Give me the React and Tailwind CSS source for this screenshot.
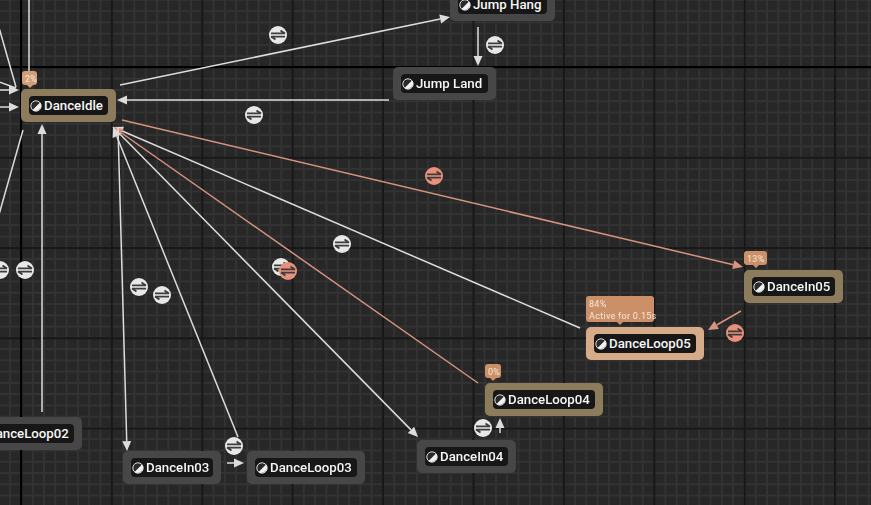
const TAN = "bg-[#8c7c5c]";
const GRAY = "bg-[#474747]";
const ACTIVE = "bg-[#d6ab88]";

const nodes = [
  { name: "DanceIdle", pos: "left-[21px] top-[89px] w-[95px]", bg: TAN },
  { name: "Jump Hang", pos: "left-[450px] top-[-12px] w-[105px]", bg: GRAY },
  { name: "Jump Land", pos: "left-[393px] top-[67px] w-[103px]", bg: GRAY },
  { name: "DanceIn05", pos: "left-[744px] top-[270px] w-[99px]", bg: TAN },
  { name: "DanceLoop05", pos: "left-[586px] top-[327px] w-[118px]", bg: ACTIVE },
  { name: "DanceLoop04", pos: "left-[485px] top-[383px] w-[118px]", bg: TAN },
  { name: "DanceIn04", pos: "left-[417px] top-[440px] w-[99px]", bg: GRAY },
  { name: "DanceIn03", pos: "left-[123px] top-[451px] w-[98px]", bg: GRAY },
  { name: "DanceLoop03", pos: "left-[247px] top-[451px] w-[118px]", bg: GRAY },
  { name: "DanceLoop02", pos: "left-[-36px] top-[417px] w-[118px]", bg: GRAY },
];

const badges = [
  { lines: ["2%"], pos: "left-[22px] top-[71px] w-[15px]", bg: "bg-[#d29e78]" },
  { lines: ["13%"], pos: "left-[744px] top-[251px] w-[23px]", bg: "bg-[#cc9068]" },
  { lines: ["84%", "Active for 0.15s"], pos: "left-[586px] top-[296px] w-[68px]", bg: "bg-[#cc9068]" },
  { lines: ["0%"], pos: "left-[485px] top-[364px] w-[16px]", bg: "bg-[#cc9068]" },
];

const W = "#dcdcdc";
const P = "#d6937e";
const wires = [
  [120, 85, 450, 17, W, 1],
  [478, 27, 478, 66, W, 1],
  [389, 100, 117, 100, W, 1],
  [580, 328, 113, 127, W, 1],
  [113, 127, 418, 437, W, 1],
  [478, 383, 113, 127, P, 1],
  [122, 120, 743, 267, P, 1],
  [238, 437, 113, 127, W, 1],
  [118, 128, 127, 451, W, 1],
  [42, 412, 42, 124, W, 1],
  [23, 130, -4, 225, W, 0],
  [-6, 10, 16, 87, W, 0],
  [29, 0, 29, 72, W, 0],
  [-6, 80, 16, 88, W, 0],
  [-4, 90, 19, 90, W, 1],
  [-4, 107, 19, 107, W, 1],
  [227, 463, 244, 463, W, 1],
  [500, 433, 500, 418, W, 1],
  [741, 311, 708, 330, P, 1],
];

const circles = [
  [278, 35, "w"], [495, 45, "w"], [254, 115, "w"], [434, 176, "p"], [342, 244, "w"],
  [281, 267, "w"], [288, 271, "p"], [139, 287, "w"], [162, 295, "w"], [25, 270, "w"],
  [0, 270, "w"], [234, 446, "w"], [483, 428, "w"], [735, 333, "p"],
];

function Wire({ d }) {
  const [x1, y1, x2, y2, c, arrow] = d;
  const a = Math.atan2(y2 - y1, x2 - x1);
  const L = 10, H = 4.5;
  const bx = x2 - L * Math.cos(a), by = y2 - L * Math.sin(a);
  const nx = -Math.sin(a) * H, ny = Math.cos(a) * H;
  return (
    <g>
      <line x1={x1} y1={y1} x2={arrow ? bx : x2} y2={arrow ? by : y2} stroke={c} strokeWidth="1.5" />
      {arrow ? <polygon points={`${x2},${y2} ${bx + nx},${by + ny} ${bx - nx},${by - ny}`} fill={c} /> : null}
    </g>
  );
}

function Swap({ d }) {
  const [x, y, k] = d;
  const fill = k === "p" ? "#e8907c" : "#e8e8e8";
  return (
    <g transform={`translate(${x} ${y})`}>
      <circle r="9" fill={fill} />
      <path d="M-7 -1.6H7M7 -1.6L2.5 -4.6" stroke="#3d3d3d" strokeWidth="1.8" fill="none" />
      <path d="M7 1.6H-7M-7 1.6L-2.5 4.6" stroke="#3d3d3d" strokeWidth="1.8" fill="none" />
    </g>
  );
}

function StateIcon() {
  return (
    <svg width="12" height="12" viewBox="0 0 12 12" className="shrink-0">
      <circle cx="6" cy="6" r="5.2" fill="#2a2a2a" stroke="#ddd" strokeWidth="1" />
      <path d="M10 2.5A5.4 5.4 0 0 1 2.5 10Z" fill="#f2f2f2" />
    </svg>
  );
}

function Node({ n }) {
  return (
    <div className={`absolute ${n.pos} flex h-[33px] items-center rounded-[5px] px-2 ${n.bg}`}>
      <div className="flex h-[19px] w-full items-center gap-[2px] rounded-[4px] bg-[#171717] pl-[1px] pr-1">
        <StateIcon />
        <span className="whitespace-nowrap font-['Roboto',sans-serif] text-[13.25px] font-medium leading-none text-[#f6f6f6]">
          {n.name}
        </span>
      </div>
    </div>
  );
}

function Badge({ b }) {
  return (
    <div className={`absolute ${b.pos} flex flex-col items-center rounded-[3px] ${b.bg}`}>
      <div className="w-full whitespace-nowrap pl-[3px] pt-[2px] font-['Roboto',sans-serif] text-[9px] leading-[12px] tracking-[0.3px] text-[#f5e8dc]">
        {b.lines.map((l) => (
          <div key={l}>{l}</div>
        ))}
      </div>
      <div className={`absolute bottom-[-2px] left-1/2 h-[5px] w-[5px] -translate-x-1/2 rotate-45 ${b.bg}`} />
    </div>
  );
}

export default function App() {
  return (
    <div className="relative h-[505px] w-[871px] overflow-hidden bg-[#272727]">
      <div className="absolute inset-0 blur-[0.5px] bg-[linear-gradient(90deg,#000_2px,transparent_2px),linear-gradient(#000_2px,transparent_2px),linear-gradient(90deg,#171717_2px,transparent_2px),linear-gradient(#171717_2px,transparent_2px),linear-gradient(90deg,#333333_2px,transparent_2px),linear-gradient(#333333_2px,transparent_2px)] [background-size:1000px_100%,100%_1000px,90.4px_100%,100%_90.25px,11.3px_100%,100%_11.28px] [background-position:20px_0,0_66px,20.5px_0,0_66.5px,20.5px_0,0_66.5px]">
        <svg width="871" height="505" viewBox="0 0 871 505" className="absolute left-0 top-0">
          {wires.map((d, i) => (
            <Wire key={i} d={d} />
          ))}
          {circles.map((d, i) => (
            <Swap key={i} d={d} />
          ))}
        </svg>
        {nodes.map((n) => (
          <Node key={n.name} n={n} />
        ))}
        {badges.map((b) => (
          <Badge key={b.lines[0]} b={b} />
        ))}
      </div>
    </div>
  );
}
